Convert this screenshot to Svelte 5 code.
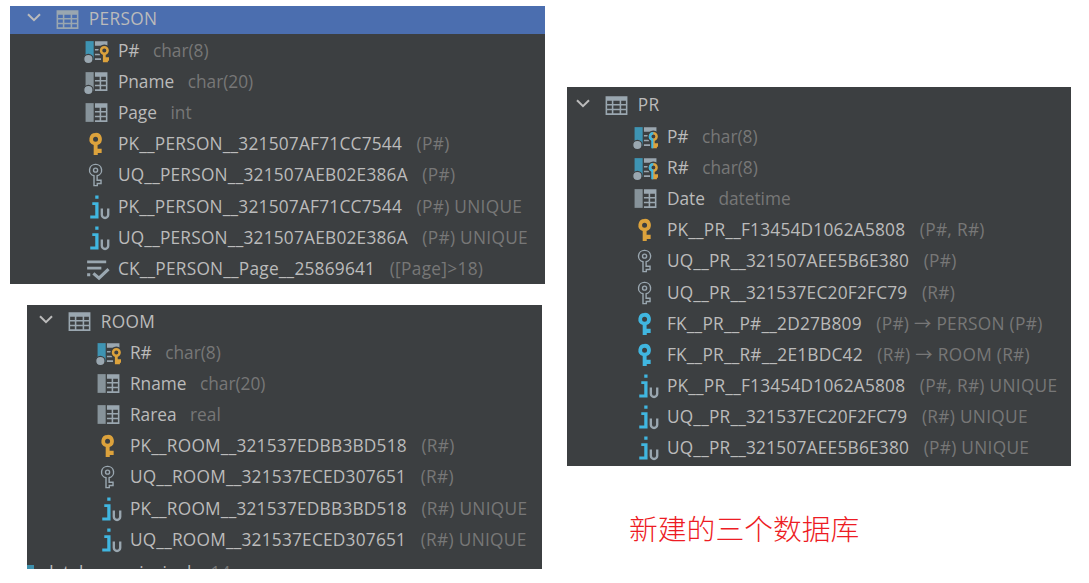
<script>
    const panels = [
        {
            id: "person",
            title: "PERSON",
            rows: [
                ["pkcol", "P#", "char(8)"],
                ["notnull", "Pname", "char(20)"],
                ["col", "Page", "int"],
                ["gold", "PK__PERSON__321507AF71CC7544", "(P#)"],
                ["unique", "UQ__PERSON__321507AEB02E386A", "(P#)"],
                ["index", "PK__PERSON__321507AF71CC7544", "(P#) UNIQUE"],
                ["index", "UQ__PERSON__321507AEB02E386A", "(P#) UNIQUE"],
                ["check", "CK__PERSON__Page__25869641", "([Page]>18)"],
            ],
        },
        {
            id: "room",
            title: "ROOM",
            rows: [
                ["pkcol", "R#", "char(8)"],
                ["col", "Rname", "char(20)"],
                ["col", "Rarea", "real"],
                ["gold", "PK__ROOM__321537EDBB3BD518", "(R#)"],
                ["unique", "UQ__ROOM__321537ECED307651", "(R#)"],
                ["index", "PK__ROOM__321537EDBB3BD518", "(R#) UNIQUE"],
                ["index", "UQ__ROOM__321537ECED307651", "(R#) UNIQUE"],
            ],
        },
        {
            id: "pr",
            title: "PR",
            rows: [
                ["fkcol", "P#", "char(8)"],
                ["fkcol", "R#", "char(8)"],
                ["col", "Date", "datetime"],
                ["gold", "PK__PR__F13454D1062A5808", "(P#, R#)"],
                ["unique", "UQ__PR__321507AEE5B6E380", "(P#)"],
                ["unique", "UQ__PR__321537EC20F2FC79", "(R#)"],
                ["blue", "FK__PR__P#__2D27B809", "(P#) → PERSON (P#)"],
                ["blue", "FK__PR__R#__2E1BDC42", "(R#) → ROOM (R#)"],
                ["index", "PK__PR__F13454D1062A5808", "(P#, R#) UNIQUE"],
                ["index", "UQ__PR__321537EC20F2FC79", "(R#) UNIQUE"],
                ["index", "UQ__PR__321507AEE5B6E380", "(P#) UNIQUE"],
            ],
        },
    ];
</script>

{#snippet icon(kind)}
    <svg class="icon" viewBox="0 0 16 16">
        {#if kind === "table"}
            <path
                class="grey"
                fill-rule="evenodd"
                d="M1 2h14v12H1zM2 5v2h3V5zM6 5v2h4V5zM11 5v2h3V5zM2 8v2h3V8zM6 8v2h4V8zM11 8v2h3V8zM2 11v2h3v-2zM6 11v2h4v-2zM11 11v2h3v-2z"
            />
        {:else if kind === "col" || kind === "notnull"}
            <path class="dim" d="M1 2h5.2v12H1z" />
            <path
                class="grey"
                fill-rule="evenodd"
                d="M7 2h8v12H7v-1h3v-2H7v-1h3V8H7V7h3V5H7zM11 5v2h3V5zM11 8v2h3V8zM11 11v2h3v-2z"
            />
            {#if kind === "notnull"}
                <circle class="grey ring" cx="2.8" cy="13.4" r="3" />
            {/if}
        {:else if kind === "pkcol" || kind === "fkcol"}
            <path class="teal" d="M1 2h5.2v12H1z" />
            <path class="grey" d="M7 2h8v3H7zM7 7h3v1H7zM7 10h3.4v1H7zM7 13h4v1H7z" />
            <circle class="grey ring" cx="2.8" cy="13.4" r="3" />
            <circle class="bg" cx="13" cy="8" r="3.8" />
            <path class="bg" d="M11 10h5v5.5h-5z" />
            <circle class="small-ring" cx="13" cy="8" r="2.1" />
            <path class="gold" d="M12.1 10h1.8v2.3H16v2.2h-.7v1h-3.2z" />
            {#if kind === "fkcol"}
                <path class="blue" d="M13 5.1a2.9 2.9 0 0 0-1.3 5.5v4.9H13V9.3a1.3 1.3 0 0 1 0-2.6z" />
            {/if}
        {:else if kind === "gold" || kind === "blue"}
            <path
                class={kind}
                fill-rule="evenodd"
                d="M7.4 1.2a4 4 0 0 1 1.3 7.8v2.4h2.6v2.7H8.8v1.3H6.2V9A4 4 0 0 1 7.4 1.2zM7.4 3.6a1.6 1.6 0 1 0 0 3.2a1.6 1.6 0 0 0 0-3.2z"
            />
        {:else if kind === "unique"}
            <path
                class="line"
                d="M7.4 1.5a3.7 3.7 0 0 1 1 7.3v2.9h2.5v2.1H8.5v1.3H6.4V8.8A3.7 3.7 0 0 1 7.4 1.5z"
            />
            <circle class="line" cx="7.4" cy="5.2" r="1.3" />
        {:else if kind === "index"}
            <path class="blue" d="M7.2 1h2.1v2.1H7.2zM5.3 5.2h4v10.4H4v-1.9h3.2V7H5.3z" />
            <path class="letter-u" d="M11.4 9.3v4a2.05 2.05 0 0 0 4.1 0v-4" />
        {:else}
            <path class="grey" d="M2 2.8h12.2v1.9H2zM2 6.8h9.1v1.9H2zM2 11h2v1.9H2z" />
            <path class="tick" d="M6 11.1l3.6 3.1 6.1-5.8" />
        {/if}
    </svg>
{/snippet}

<main class="page">
    {#each panels as panel}
        <section class="panel {panel.id}">
            <header class="head">
                <svg class="arrow" viewBox="0 0 14 9">
                    <path d="M1 1.2l6 6 6-6" />
                </svg>
                {@render icon("table")}
                <span class="title">{panel.title}</span>
            </header>
            {#each panel.rows as [kind, name, detail]}
                <div class="row" class:key={name.includes("__")}>
                    {@render icon(kind)}
                    <span class="name">{name}</span>
                    <span class="detail">{detail}</span>
                </div>
            {/each}
            {#if panel.id === "room"}
                <div class="row cut">
                    <i class="db"></i>
                    <span class="name">database principals</span>
                    <span class="detail">14</span>
                </div>
            {/if}
        </section>
    {/each}
    <p class="caption">新建的三个数据库</p>
</main>

<style>
    :global(body) {
        margin: 0;
        background: #fff;
    }

    .page {
        width: 1089px;
        height: 583px;
        box-sizing: border-box;
        padding: 6px 18px 0 10px;
        display: grid;
        grid-template-columns: 535px 504px;
        grid-template-rows: 81px 197px 21px 161px 103px;
        column-gap: 22px;
        overflow: hidden;
        font-family: "Open Sans", "Noto Sans CJK SC", sans-serif;
        font-size: 17.3px;
    }

    .panel {
        --indent: 0px;
        background: #3c3f41;
        color: #bbb;
        overflow: hidden;
        white-space: nowrap;
    }

    .person {
        grid-column: 1;
        grid-row: 1 / 3;
    }

    .room {
        --indent: -5px;
        grid-column: 1;
        grid-row: 4 / 6;
        width: 515px;
        height: 264px;
        margin-left: 17px;
    }

    .pr {
        --indent: -8px;
        grid-column: 2;
        grid-row: 2 / 5;
    }

    .head {
        display: flex;
        align-items: center;
        height: 28px;
        margin-bottom: 1px;
        padding-left: calc(17px + var(--indent));
        padding-bottom: 1px;
        box-sizing: border-box;
    }

    .person .head {
        background: #4b6eaf;
    }

    .room .head {
        height: 32px;
        margin-bottom: 0;
        padding-top: 1px;
        padding-bottom: 0;
    }

    .pr .head {
        height: 34px;
        margin-bottom: 0;
        padding-top: 3px;
        padding-bottom: 0;
    }

    .arrow {
        width: 14px;
        height: 9px;
        margin: 0 13.5px 4px 0;
        fill: none;
        stroke: #bbb;
        stroke-width: 2;
    }

    .icon {
        width: 25px;
        height: 25px;
        flex: none;
        overflow: visible;
    }

    .title {
        margin-left: 9.2px;
        padding-bottom: 2px;
        letter-spacing: 0.35px;
    }

    .room .title {
        padding-bottom: 1px;
    }

    .row {
        display: flex;
        align-items: center;
        height: 31.1px;
        padding-left: calc(73.7px + var(--indent));
        line-height: 24px;
    }

    .name {
        margin-left: 9.2px;
        padding-top: 1px;
    }

    .detail {
        margin-left: 13.5px;
        padding-top: 1px;
        color: #777;
    }

    .key .name {
        letter-spacing: 0.22px;
    }

    .key .detail {
        margin-left: 14.5px;
        letter-spacing: 0.3px;
    }

    .cut {
        padding-left: 0;
    }

    .cut .name {
        margin: 4px 0 0 9px;
    }

    .cut .detail {
        margin: 4px 0 0 11px;
    }

    .db {
        width: 7px;
        height: 10px;
        background: #3e8fab;
    }

    .caption {
        grid-column: 2;
        grid-row: 5;
        margin: 41px 0 0 62px;
        color: #ed1c24;
        font-family: "Noto Sans CJK SC", sans-serif;
        font-size: 28.8px;
        font-weight: 300;
        line-height: 42px;
    }

    .grey {
        fill: #9aa7b0;
    }

    .dim {
        fill: #87939a;
    }

    .teal {
        fill: #3e94b3;
    }

    .gold {
        fill: #dca23c;
    }

    .blue {
        fill: #40b6e0;
    }

    .bg {
        fill: #3c3f41;
    }

    .ring {
        stroke: #3c3f41;
        stroke-width: 0.8;
    }

    .small-ring {
        fill: none;
        stroke: #dca23c;
        stroke-width: 1.6;
    }

    .line {
        fill: none;
        stroke: #9aa7b0;
        stroke-width: 0.9;
    }

    .letter-u {
        fill: none;
        stroke: #9aa7b0;
        stroke-width: 1.5;
    }

    .tick {
        fill: none;
        stroke: #9aa7b0;
        stroke-width: 2;
    }
</style>
